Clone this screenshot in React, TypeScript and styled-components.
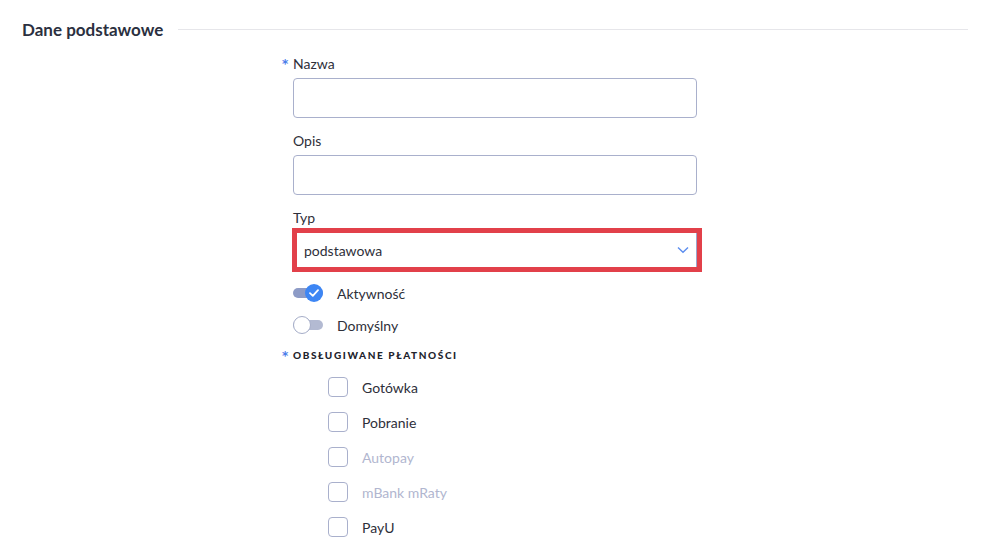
import React, { useState } from "react";
import styled, { createGlobalStyle } from "styled-components";

const GlobalStyle = createGlobalStyle`
  html, body {
    margin: 0;
    padding: 0;
    background: #ffffff;
    font-family: Lato, "Open Sans", "Noto Sans", sans-serif;
    color: #2e2f3a;
  }
  * { box-sizing: border-box; }
`;

const payments = [
  { name: "Gotówka", disabled: false },
  { name: "Pobranie", disabled: false },
  { name: "Autopay", disabled: true },
  { name: "mBank mRaty", disabled: true },
  { name: "PayU", disabled: false },
];

const App: React.FunctionComponent = () => {
  const [active, setActive] = useState(true);
  const [isDefault, setIsDefault] = useState(false);

  return (
    <PageWrapper>
      <GlobalStyle />
      <SectionHeader>
        <SectionTitle>Dane podstawowe</SectionTitle>
        <SectionLine />
      </SectionHeader>

      <FormColumn>
        <FieldLabel required>Nazwa</FieldLabel>
        <TextInput />

        <FieldLabel>Opis</FieldLabel>
        <TextInput />

        <FieldLabel>Typ</FieldLabel>
        <HighlightBox>
          <SelectBox>
            <SelectValue>podstawowa</SelectValue>
            <svg width="12" height="8" viewBox="0 0 12 8">
              <path
                d="M1 1.5 L6 6.2 L11 1.5"
                fill="none"
                stroke="#5b8def"
                strokeWidth="1.4"
              />
            </svg>
          </SelectBox>
        </HighlightBox>

        <ToggleRow onClick={() => setActive(!active)}>
          <ToggleTrack on={active}>
            <ToggleKnob on={active}>
              {active && (
                <svg width="10" height="8" viewBox="0 0 10 8">
                  <path
                    d="M1 4.2 L3.8 6.8 L9 1.2"
                    fill="none"
                    stroke="#ffffff"
                    strokeWidth="1.8"
                    strokeLinecap="round"
                    strokeLinejoin="round"
                  />
                </svg>
              )}
            </ToggleKnob>
          </ToggleTrack>
          <ToggleLabel>Aktywność</ToggleLabel>
        </ToggleRow>

        <ToggleRow onClick={() => setIsDefault(!isDefault)}>
          <ToggleTrack on={isDefault}>
            <ToggleKnob on={isDefault} />
          </ToggleTrack>
          <ToggleLabel>Domyślny</ToggleLabel>
        </ToggleRow>

        <GroupLabel>OBSŁUGIWANE PŁATNOŚCI</GroupLabel>

        <PaymentList>
          {payments.map((p) => (
            <PaymentRow key={p.name}>
              <CheckBox />
              <PaymentName disabled={p.disabled}>{p.name}</PaymentName>
            </PaymentRow>
          ))}
        </PaymentList>
      </FormColumn>
    </PageWrapper>
  );
};

const PageWrapper = styled.div`
  width: 992px;
  height: 545px;
  overflow: hidden;
  padding: 18px 24px 0 22px;
`;

const SectionHeader = styled.div`
  display: flex;
  align-items: center;
  gap: 15px;
  height: 22px;
`;

const SectionTitle = styled.h2`
  margin: 0;
  font-size: 17px;
  font-weight: 700;
  color: #2b3040;
  white-space: nowrap;
`;

const SectionLine = styled.div`
  flex: 1;
  height: 1px;
  background: #e6e6ea;
`;

const FormColumn = styled.div`
  width: 404px;
  margin-left: 271px;
  margin-top: 15px;
  display: flex;
  flex-direction: column;
`;

const Asterisk = `
  content: "*";
  position: absolute;
  left: -11px;
  top: 0;
  font-family: "DejaVu Sans", sans-serif;
  font-size: 12px;
  font-weight: 700;
  letter-spacing: 0;
  line-height: 18px;
  color: #4a7dea;
`;

const FieldLabel = styled.label<{ required?: boolean }>`
  position: relative;
  font-size: 14px;
  line-height: 18px;
  color: #2e2f3a;
  margin-bottom: 5px;
  margin-top: 14px;

  &:first-child {
    margin-top: 0;
  }

  &::before {
    ${(p) => (p.required ? Asterisk : "content: none;")}
  }
`;

const TextInput = styled.input`
  width: 404px;
  height: 40px;
  border: 1px solid #a9b0cc;
  border-radius: 4px;
  background: #ffffff;
  outline: none;
`;

const HighlightBox = styled.div`
  width: 410px;
  height: 44px;
  margin-left: -1px;
  margin-top: -4px;
  border: 5px solid #e2404a;
`;

const SelectBox = styled.div`
  width: 100%;
  height: 100%;
  display: flex;
  align-items: center;
  justify-content: space-between;
  padding: 0 7px 0 7px;
  border-right: 1px solid #9aa6cc;
  background: #ffffff;
`;

const SelectValue = styled.span`
  font-size: 14px;
  color: #2e2f3a;
`;

const ToggleRow = styled.div`
  display: flex;
  align-items: center;
  gap: 14px;
  height: 20px;
  margin-top: 11px;
  cursor: pointer;

  & + & {
    margin-top: 12px;
  }
`;

const ToggleTrack = styled.div<{ on: boolean }>`
  position: relative;
  width: 30px;
  height: 10px;
  border-radius: 5px;
  background: ${(p) => (p.on ? "#8d9bc6" : "#b3bad2")};
`;

const ToggleKnob = styled.div<{ on: boolean }>`
  position: absolute;
  top: -4px;
  left: ${(p) => (p.on ? "12px" : "0")};
  width: 18px;
  height: 18px;
  border-radius: 50%;
  display: flex;
  align-items: center;
  justify-content: center;
  background: ${(p) => (p.on ? "#3d86f4" : "#ffffff")};
  border: ${(p) => (p.on ? "none" : "1px solid #a5adc8")};
`;

const ToggleLabel = styled.span`
  font-size: 14px;
  color: #2e2f3a;
`;

const GroupLabel = styled.div`
  position: relative;
  margin-top: 13px;
  font-size: 10px;
  font-weight: 900;
  letter-spacing: 1.6px;
  line-height: 14px;
  color: #22232c;

  &::before {
    ${Asterisk}
    top: -1px;
  }
`;

const PaymentList = styled.div`
  display: flex;
  flex-direction: column;
  gap: 15px;
  margin-top: 15px;
  padding-left: 35px;
`;

const PaymentRow = styled.div`
  display: flex;
  align-items: center;
  gap: 14px;
  height: 20px;
`;

const CheckBox = styled.div`
  width: 20px;
  height: 20px;
  border: 1px solid #a9b0cc;
  border-radius: 4px;
  background: #ffffff;
`;

const PaymentName = styled.span<{ disabled: boolean }>`
  font-size: 14px;
  color: ${(p) => (p.disabled ? "#b1b6cf" : "#2e2f3a")};
`;

export default App;
